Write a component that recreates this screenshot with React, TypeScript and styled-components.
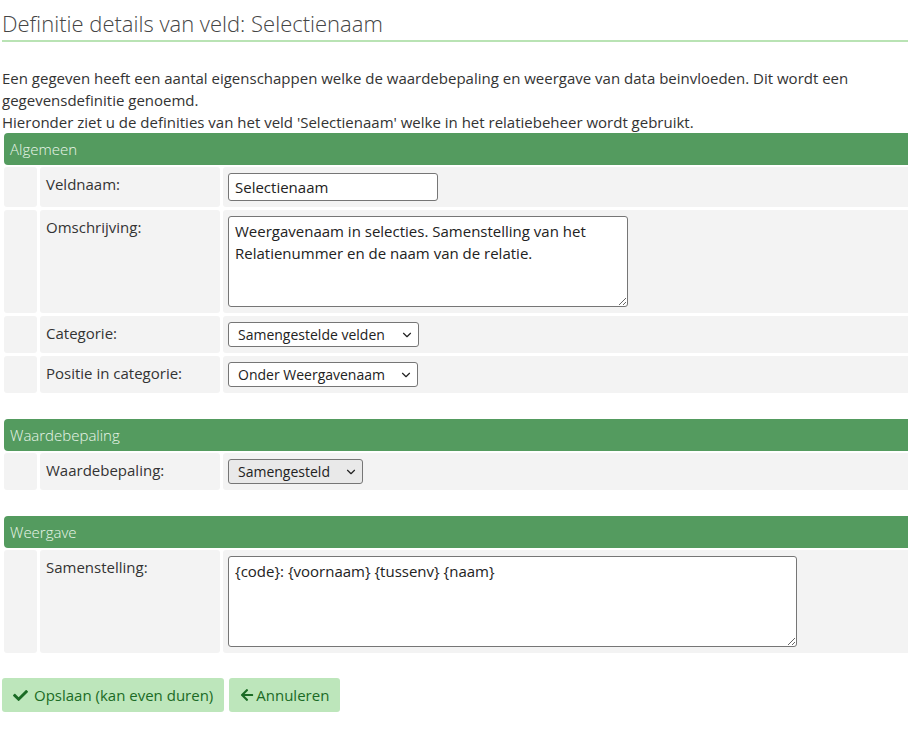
import React from "react";
import styled, { createGlobalStyle } from "styled-components";
import { FaCheck, FaArrowLeft } from "react-icons/fa";
import { ChevronDown } from "lucide-react";

const Global = createGlobalStyle`
  html, body { margin: 0; padding: 0; background: #fff; overflow-x: hidden; }
  body { font-family: "Open Sans", "Noto Sans", sans-serif; color: #333; font-size: 15px; }
  * { box-sizing: border-box; }
`;

const Page = styled.div`
  padding: 0 0 0 2px;
  width: calc(100% + 10px);
`;

const Title = styled.h1`
  margin: 0;
  padding: 10px 0 4px 0;
  font-size: 22px;
  font-weight: 300;
  color: #454545;
  line-height: 26px;
  border-bottom: 2px solid #b9e3b4;
`;

const Intro = styled.p`
  margin: 25px 0 0 0;
  line-height: 22px;
  font-size: 15px;
  color: #333;
  padding-right: 12px;
`;

const Section = styled.section<{ $gap: number }>`
  margin: ${(p) => p.$gap}px 0 0 2px;
`;

const Header = styled.div`
  height: 32px;
  background: #549b5f;
  color: #eaf6ea;
  border-radius: 4px;
  padding: 0 6px;
  display: flex;
  align-items: center;
  font-size: 15px;
  font-weight: 300;
`;

const Grid = styled.div`
  display: grid;
  grid-template-columns: 33px 180px 1fr;
  column-gap: 3px;
  row-gap: 3px;
  margin-top: 2px;
`;

const Cell = styled.div`
  background: #f3f3f3;
  border-radius: 3px;
`;

const LabelCell = styled(Cell)`
  padding: 7px 6px;
  font-size: 15px;
  line-height: 20px;
  color: #333;
`;

const FieldCell = styled(Cell)`
  padding: 6px 5px;
`;

const TextInput = styled.input`
  width: 210px;
  height: 28px;
  border: 1px solid #767676;
  border-radius: 3px;
  padding: 1px 6px;
  font-family: "Open Sans", sans-serif;
  font-size: 15px;
  color: #222;
  background: #fff;
  display: block;
`;

const TextArea = styled.textarea<{ $w: number }>`
  width: ${(p) => p.$w}px;
  height: 91px;
  border: 1px solid #767676;
  border-radius: 3px;
  padding: 3px 6px;
  font-family: "Open Sans", sans-serif;
  font-size: 15px;
  line-height: 22px;
  color: #222;
  background: #fff;
  display: block;
  resize: both;
`;

const SelectWrap = styled.div`
  position: relative;
  display: inline-block;
  vertical-align: top;
`;

const Select = styled.select<{ $w: number; $grey?: boolean }>`
  width: ${(p) => p.$w}px;
  height: 25px;
  border: 1px solid #767676;
  border-radius: 3px;
  padding: 0 22px 0 9px;
  appearance: none;
  -webkit-appearance: none;
  font-family: "Open Sans", sans-serif;
  font-size: 14px;
  color: #222;
  background: ${(p) => (p.$grey ? "#e9e9e9" : "#fff")};
  display: block;
`;

const Chevron = styled.span`
  position: absolute;
  right: 5px;
  top: 50%;
  transform: translateY(-50%);
  display: flex;
  pointer-events: none;
  color: #222;
`;

const Buttons = styled.div`
  display: flex;
  gap: 5px;
  margin-top: 25px;
`;

const Button = styled.button<{ $gap: number }>`
  display: inline-flex;
  align-items: center;
  gap: ${(p) => p.$gap}px;
  height: 34px;
  padding: 0 11px;
  border: none;
  border-radius: 3px;
  background: #bde6bb;
  color: #1b6b25;
  font-family: "Open Sans", sans-serif;
  font-size: 15px;
  cursor: pointer;
`;

function Dropdown({ w, grey, value }: { w: number; grey?: boolean; value: string }) {
  return (
    <SelectWrap>
      <Select $w={w} $grey={grey} defaultValue="a">
        <option value="a">{value}</option>
      </Select>
      <Chevron>
        <ChevronDown size={14} strokeWidth={2} />
      </Chevron>
    </SelectWrap>
  );
}

export default function App() {
  return (
    <Page>
      <Global />
      <Title>Definitie details van veld: Selectienaam</Title>
      <Intro>
        Een gegeven heeft een aantal eigenschappen welke de waardebepaling en weergave van data beinvloeden. Dit wordt een gegevensdefinitie genoemd.
        <br />
        Hieronder ziet u de definities van het veld 'Selectienaam' welke in het relatiebeheer wordt gebruikt.
      </Intro>

      <Section $gap={0}>
        <Header>Algemeen</Header>
        <Grid>
          <Cell />
          <LabelCell>Veldnaam:</LabelCell>
          <FieldCell>
            <TextInput defaultValue="Selectienaam" />
          </FieldCell>

          <Cell />
          <LabelCell>Omschrijving:</LabelCell>
          <FieldCell>
            <TextArea
              $w={400}
              defaultValue="Weergavenaam in selecties. Samenstelling van het Relatienummer en de naam van de relatie."
            />
          </FieldCell>

          <Cell />
          <LabelCell>Categorie:</LabelCell>
          <FieldCell>
            <Dropdown w={191} value="Samengestelde velden" />
          </FieldCell>

          <Cell />
          <LabelCell>Positie in categorie:</LabelCell>
          <FieldCell>
            <Dropdown w={190} value="Onder Weergavenaam" />
          </FieldCell>
        </Grid>
      </Section>

      <Section $gap={26}>
        <Header>Waardebepaling</Header>
        <Grid>
          <Cell />
          <LabelCell>Waardebepaling:</LabelCell>
          <FieldCell>
            <Dropdown w={135} grey value="Samengesteld" />
          </FieldCell>
        </Grid>
      </Section>

      <Section $gap={26}>
        <Header>Weergave</Header>
        <Grid>
          <Cell />
          <LabelCell>Samenstelling:</LabelCell>
          <FieldCell>
            <TextArea $w={569} defaultValue="{code}: {voornaam} {tussenv} {naam}" />
          </FieldCell>
        </Grid>
      </Section>

      <Buttons>
        <Button $gap={6}>
          <FaCheck size={15} /> Opslaan (kan even duren)
        </Button>
        <Button $gap={2}>
          <FaArrowLeft size={14} />Annuleren
        </Button>
      </Buttons>
    </Page>
  );
}
